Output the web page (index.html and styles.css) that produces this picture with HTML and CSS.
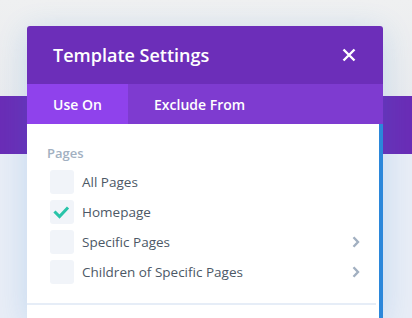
FILE: index.html
```html
<!DOCTYPE html>
<html>
<head>
<meta charset="utf-8">
<link rel="stylesheet" href="styles.css">
</head>
<body>
<div class="page">
  <div class="page-top"></div>
  <div class="page-band"></div>
  <div class="page-rest"></div>
</div>
<div class="modal">
  <div class="modal-header">
    <h1 class="modal-title">Template Settings</h1>
    <button class="close" aria-label="Close">
      <svg width="14" height="14" viewBox="0 0 14 14"><path d="M1.5 1.5 L12.5 12.5 M12.5 1.5 L1.5 12.5" stroke="#fff" stroke-width="2.4" fill="none"/></svg>
    </button>
  </div>
  <div class="tabs">
    <div class="tab active">Use On</div>
    <div class="tab">Exclude From</div>
  </div>
  <div class="modal-body">
    <div class="body-inner">
      <div class="group-label">Pages</div>
      <ul class="options">
        <li class="option"><span class="box"></span><span class="label">All Pages</span></li>
        <li class="option"><span class="box"><svg width="24" height="24" viewBox="0 0 24 24"><path d="M5.5 12.5 L9.5 16.5 L17 8.5" stroke="#29c4a9" stroke-width="3" fill="none" stroke-linecap="square"/></svg></span><span class="label">Homepage</span></li>
        <li class="option"><span class="box"></span><span class="label">Specific Pages</span><svg class="chev" width="8" height="12" viewBox="0 0 8 12"><path d="M1.5 1.2 L6 6 L1.5 10.8" stroke="#a2b0c1" stroke-width="2.4" fill="none"/></svg></li>
        <li class="option"><span class="box"></span><span class="label">Children of Specific Pages</span><svg class="chev" width="8" height="12" viewBox="0 0 8 12"><path d="M1.5 1.2 L6 6 L1.5 10.8" stroke="#a2b0c1" stroke-width="2.4" fill="none"/></svg></li>
      </ul>
      <div class="separator"></div>
    </div>
    <div class="scrollbar"></div>
  </div>
</div>
</body>
</html>
```

FILE: styles.css
```css
html, body {
  margin: 0;
  padding: 0;
}
body {
  width: 412px;
  height: 318px;
  overflow: hidden;
  font-family: "Open Sans", "Liberation Sans", sans-serif;
  position: relative;
}
.page {
  display: flex;
  flex-direction: column;
  height: 318px;
}
.page-top {
  height: 96px;
  background: linear-gradient(180deg, #eff0f1 0%, #e9ebee 100%);
}
.page-band {
  height: 58px;
  background: #6a2db6;
}
.page-rest {
  flex: 1;
  background: #e8edf6;
}
.modal {
  position: absolute;
  left: 27px;
  top: 26px;
  width: 356px;
  height: 292px;
  display: flex;
  flex-direction: column;
  border-radius: 3px 3px 0 0;
  overflow: hidden;
  box-shadow: 0 5px 30px rgba(43, 135, 218, 0.2);
}
.modal-header {
  height: 58px;
  background: #6c2eb9;
  display: flex;
  align-items: center;
  justify-content: space-between;
  padding: 0 26px;
}
.modal-title {
  margin: 0;
  color: #fff;
  font-size: 18px;
  font-weight: 600;
  letter-spacing: 0;
}
.close {
  background: none;
  border: 0;
  padding: 0;
  width: 14px;
  height: 14px;
  display: flex;
  margin-right: 1px;
}
.tabs {
  height: 40px;
  background: #7e3bd0;
  display: flex;
}
.tab {
  padding: 0 26px;
  display: flex;
  align-items: center;
  color: #fff;
  font-size: 14px;
  font-weight: 600;
}
.tab.active {
  background: #8f42ec;
  width: 101px;
  box-sizing: border-box;
}
.modal-body {
  flex: 1;
  display: flex;
  background: #fff;
}
.body-inner {
  flex: 1;
  padding-top: 20px;
  padding-right: 3px;
}
.scrollbar {
  width: 4px;
  background: #2b87da;
}
.group-label {
  margin-left: 20px;
  color: #a2b0c1;
  font-size: 13px;
  font-weight: 600;
  line-height: 18px;
}
.options {
  list-style: none;
  margin: 8px 0 0;
  padding: 0 0 0 23px;
  display: flex;
  flex-direction: column;
  gap: 6px;
}
.option {
  display: flex;
  align-items: center;
  height: 24px;
}
.box {
  width: 24px;
  height: 24px;
  border-radius: 3px;
  background: #f1f4f9;
  display: flex;
}
.label {
  margin-left: 8px;
  color: #4c5866;
  font-size: 13.5px;
  font-weight: 500;
  flex: 1;
}
.chev {
  margin-right: 16px;
}
.separator {
  margin-top: 19px;
  height: 2px;
  background: #e6edf7;
}
```
